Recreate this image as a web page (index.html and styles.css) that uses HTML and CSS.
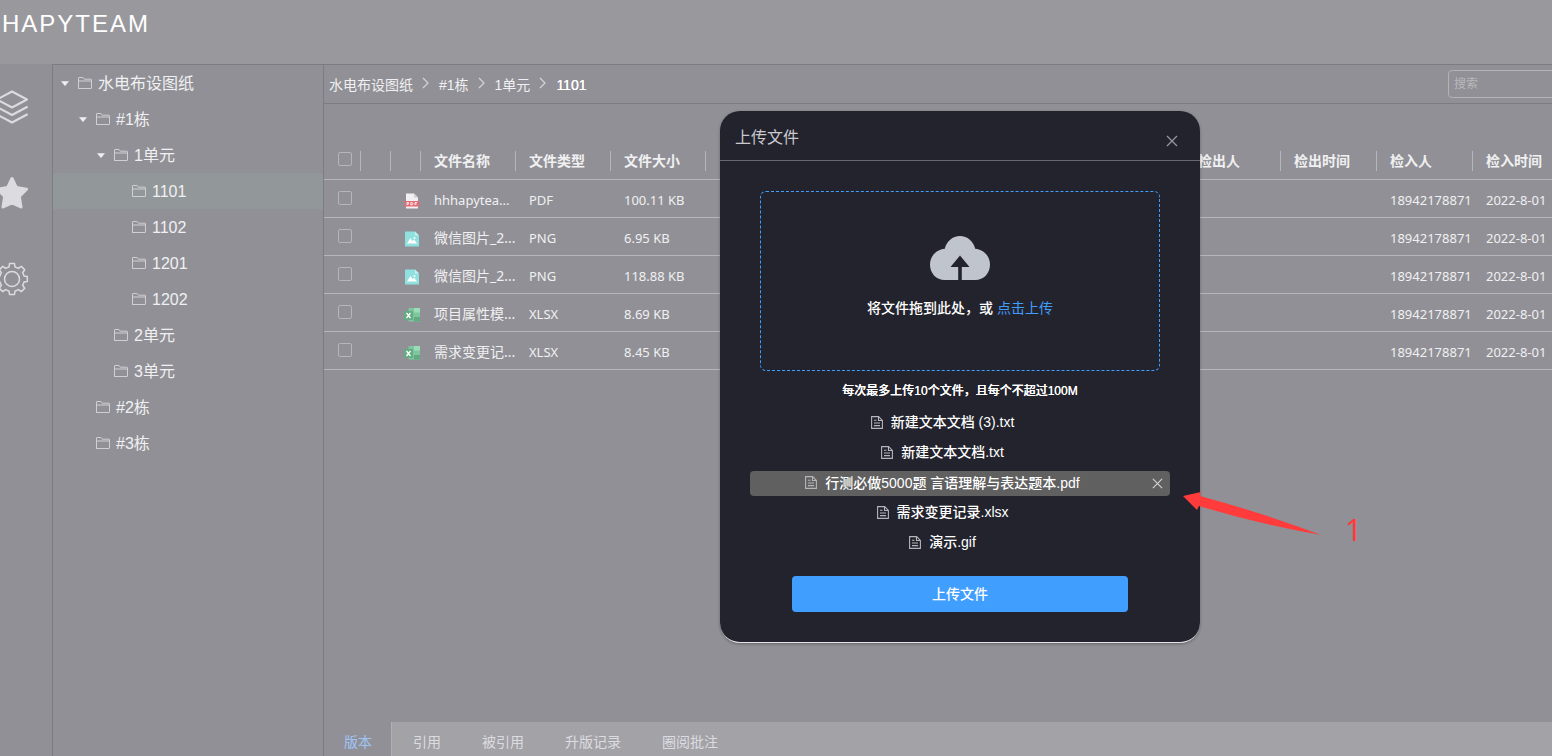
FILE: index.html
```html
<!DOCTYPE html>
<html lang="zh-CN">
<head>
<meta charset="utf-8">
<title>HAPYTEAM</title>
<link rel="stylesheet" href="styles.css">
</head>
<body>
<svg class="sprite" aria-hidden="true">
  <symbol id="folder" viewBox="0 0 14 12"><path d="M.5 11.5V1Q.5.5 1 .5H5L6.3 2.2H13Q13.500 2.200 13.500 2.700V11Q13.500 11.500 13 11.500H1Q.5 11.500.5 11Z M.5 4H13.500" fill="none" stroke="currentColor"/></symbol>
  <symbol id="caret" viewBox="0 0 8 5"><path d="M.5.5H7.500L4 4.800Z" fill="currentColor" stroke="currentColor" stroke-width=".5" stroke-linejoin="round"/></symbol>
  <symbol id="chevron" viewBox="0 0 8 12"><path d="M1 1L6 6L1 11" fill="none" stroke="currentColor" stroke-width="1.200"/></symbol>
  <symbol id="cross" viewBox="0 0 12 12"><path d="M1 1L11 11M11 1L1 11" fill="none" stroke="currentColor" stroke-width="1.300"/></symbol>
  <symbol id="doc" viewBox="0 0 12 13"><path d="M.6.6H7.600L11.400 4.400V12.400H.6ZM7.500.8V4.500H11.200M3 4.300H5.500M3 7H9M3 9.600H9" fill="none" stroke="currentColor" stroke-width="1.100"/></symbol>
  <symbol id="pdf" viewBox="0 0 16 16"><path d="M2 .5H10L14 4.500V15.500H2Z" fill="#f1eff1"/><path d="M10 .5V4.500H14Z" fill="#cfcdd2"/><path d="M.5 8H15.500L15 13.500H1Z" fill="#e56b75"/><path d="M3 12V9.500H4.500V11H3M6.800 12V9.500Q9 9.500 9 10.800T6.800 12M11 12V9.500H13M11 10.900H12.700" fill="none" stroke="#fff" stroke-width=".8"/></symbol>
  <symbol id="img" viewBox="0 0 16 16"><path d="M1 .5H11L15 4.500V15.500H1Z" fill="#8fe0df"/><path d="M11 .5V4.500H15Z" fill="#c4f0ee"/><path d="M3 12.500L6.500 7L8.500 10L10 8.500L13 12.500Z" fill="#fff"/><circle cx="10.500" cy="7" r="1" fill="#fff"/></symbol>
  <symbol id="xls" viewBox="0 0 16 16"><path d="M4.500 1H16V14.500H4.500Z" fill="#7fc59e"/><path d="M10 1H16V5.500H10Z" fill="#9bdcb8"/><path d="M10 10H16V14.500H10Z" fill="#62ab82"/><path d="M0 4H9V13H0Z" fill="#64ac83"/><path d="M2.500 6L6.500 11M6.500 6L2.500 11" stroke="#fff" stroke-width="1.300"/></symbol>
</svg>
<div class="app">
  <header class="topbar"><h1 class="brand">HAPYTEAM</h1></header>
  <div class="workspace">
    <nav class="rail">
      <button class="rail-btn" aria-label="图层"><svg viewBox="0 0 32 34" fill="none" stroke="currentColor" stroke-width="2" stroke-linejoin="round" stroke-linecap="round"><path d="M16 1.500L31 9.500L16 17.500L1 9.500ZM1 17L16 25L31 17M1 24.500L16 32.500L31 24.500"/></svg></button>
      <button class="rail-btn" aria-label="收藏"><svg viewBox="0 0 32 34"><path d="M16 2.500L20.300 11.500L30.500 13.200L23.300 20.500L25 31L16 26.800L7 31L8.700 20.500L1.500 13.200L11.700 11.500Z" fill="currentColor" stroke="currentColor" stroke-width="3" stroke-linejoin="round"/></svg></button>
      <button class="rail-btn" aria-label="设置"><svg viewBox="0 0 32 34" fill="none" stroke="currentColor" stroke-width="1.500" stroke-linejoin="round"><circle cx="16" cy="17" r="7.500"/><path d="M13.500 1.500H18.500L19 5Q21 5.500 22.300 6.400L25.300 4.400L28.700 7.800L26.600 10.700Q27.500 12.300 28 14L31.300 14.500V19.500L28 20Q27.500 21.800 26.600 23.300L28.700 26.200L25.300 29.600L22.300 27.600Q21 28.500 19 29L18.500 32.500H13.500L13 29Q11 28.500 9.700 27.600L6.700 29.600L3.300 26.200L5.400 23.300Q4.500 21.800 4 20L.7 19.500V14.500L4 14Q4.500 12.300 5.400 10.700L3.300 7.800L6.700 4.400L9.700 6.400Q11 5.500 13 5Z"/></svg></button>
    </nav>
    <aside class="tree">
      <div class="node l0"><svg class="caret"><use href="#caret"/></svg><svg class="folder"><use href="#folder"/></svg><span>水电布设图纸</span></div>
      <div class="node l1"><svg class="caret"><use href="#caret"/></svg><svg class="folder"><use href="#folder"/></svg><span>#1栋</span></div>
      <div class="node l2"><svg class="caret"><use href="#caret"/></svg><svg class="folder"><use href="#folder"/></svg><span>1单元</span></div>
      <div class="node l3 current"><i class="caret"></i><svg class="folder"><use href="#folder"/></svg><span>1101</span></div>
      <div class="node l3"><i class="caret"></i><svg class="folder"><use href="#folder"/></svg><span>1102</span></div>
      <div class="node l3"><i class="caret"></i><svg class="folder"><use href="#folder"/></svg><span>1201</span></div>
      <div class="node l3"><i class="caret"></i><svg class="folder"><use href="#folder"/></svg><span>1202</span></div>
      <div class="node l2"><i class="caret"></i><svg class="folder"><use href="#folder"/></svg><span>2单元</span></div>
      <div class="node l2"><i class="caret"></i><svg class="folder"><use href="#folder"/></svg><span>3单元</span></div>
      <div class="node l1"><i class="caret"></i><svg class="folder"><use href="#folder"/></svg><span>#2栋</span></div>
      <div class="node l1"><i class="caret"></i><svg class="folder"><use href="#folder"/></svg><span>#3栋</span></div>
    </aside>
    <main class="content">
      <div class="pathbar">
        <nav class="crumbs">
          <a href="#">水电布设图纸</a><svg class="chevron"><use href="#chevron"/></svg>
          <a href="#">#1栋</a><svg class="chevron"><use href="#chevron"/></svg>
          <a href="#">1单元</a><svg class="chevron"><use href="#chevron"/></svg>
          <a href="#" class="here">1101</a>
        </nav>
        <input class="search" type="text" placeholder="搜索" aria-label="搜索">
      </div>
      <div class="files">
        <table>
          <colgroup><col class="c-check"><col class="c-slim"><col class="c-slim"><col class="c-file"><col class="c-file"><col class="c-file"><col class="c-file"><col class="c-meta"><col class="c-meta"><col class="c-meta"><col class="c-meta"><col class="c-meta"><col class="c-meta"><col class="c-meta"><col class="c-meta"></colgroup>
          <thead>
            <tr><th><input type="checkbox" aria-label="全选"></th><th></th><th></th><th>文件名称</th><th>文件类型</th><th>文件大小</th><th></th><th></th><th></th><th></th><th></th><th>检出人</th><th>检出时间</th><th>检入人</th><th>检入时间</th></tr>
          </thead>
          <tbody>
            <tr><td><input type="checkbox" aria-label="选择文件 1"></td><td></td><td class="kind"><svg><use href="#pdf"/></svg></td><td>hhhapytea...</td><td>PDF</td><td>100.11 KB</td><td></td><td></td><td></td><td></td><td></td><td></td><td></td><td>18942178871</td><td>2022-8-01</td></tr>
            <tr><td><input type="checkbox" aria-label="选择文件 2"></td><td></td><td class="kind"><svg><use href="#img"/></svg></td><td class="name">微信图片_2...</td><td>PNG</td><td>6.95 KB</td><td></td><td></td><td></td><td></td><td></td><td></td><td></td><td>18942178871</td><td>2022-8-01</td></tr>
            <tr><td><input type="checkbox" aria-label="选择文件 3"></td><td></td><td class="kind"><svg><use href="#img"/></svg></td><td class="name">微信图片_2...</td><td>PNG</td><td>118.88 KB</td><td></td><td></td><td></td><td></td><td></td><td></td><td></td><td>18942178871</td><td>2022-8-01</td></tr>
            <tr><td><input type="checkbox" aria-label="选择文件 4"></td><td></td><td class="kind"><svg><use href="#xls"/></svg></td><td class="name">项目属性模...</td><td>XLSX</td><td>8.69 KB</td><td></td><td></td><td></td><td></td><td></td><td></td><td></td><td>18942178871</td><td>2022-8-01</td></tr>
            <tr><td><input type="checkbox" aria-label="选择文件 5"></td><td></td><td class="kind"><svg><use href="#xls"/></svg></td><td class="name">需求变更记...</td><td>XLSX</td><td>8.45 KB</td><td></td><td></td><td></td><td></td><td></td><td></td><td></td><td>18942178871</td><td>2022-8-01</td></tr>
          </tbody>
        </table>
      </div>
      <div class="tabs">
        <button class="tab active">版本</button><button class="tab">引用</button><button class="tab">被引用</button><button class="tab">升版记录</button><button class="tab">圈阅批注</button>
      </div>
    </main>
  </div>
</div>
<div class="overlay">
  <section class="dialog" role="dialog" aria-labelledby="dialog-title">
    <header class="dialog-head">
      <h2 id="dialog-title">上传文件</h2>
      <button class="close" aria-label="关闭"><svg><use href="#cross"/></svg></button>
    </header>
    <div class="dialog-body">
      <div class="drop">
        <svg class="cloud" viewBox="0 0 60 44"><path d="M14.500 44C6.500 44 0 37.500 0 28.500C0 20 6.500 13.500 14.800 12.700C16.500 5.500 22.500 0 30 0S43.500 5.500 45.200 12.700C53.500 13.500 60 20 60 28.500C60 37.500 53.500 44 45.500 44H31.800V31H39.500L30 19.500L20.500 31H28.200V44Z" fill="#c0c4cc"/></svg>
        <p class="drop-text">将文件拖到此处，或 <a href="#">点击上传</a></p>
      </div>
      <p class="tip">每次最多上传10个文件，且每个不超过100M</p>
      <ul class="queue">
        <li><svg class="doc"><use href="#doc"/></svg><span>新建文本文档 (3).txt</span></li>
        <li><svg class="doc"><use href="#doc"/></svg><span>新建文本文档.txt</span></li>
        <li class="hover"><svg class="doc"><use href="#doc"/></svg><span>行测必做5000题 言语理解与表达题本.pdf</span><button class="remove" aria-label="移除"><svg><use href="#cross"/></svg></button></li>
        <li><svg class="doc"><use href="#doc"/></svg><span>需求变更记录.xlsx</span></li>
        <li><svg class="doc"><use href="#doc"/></svg><span>演示.gif</span></li>
      </ul>
      <button class="submit">上传文件</button>
    </div>
    <div class="note">
      <svg class="arrow" viewBox="0 0 138 46"><path d="M0 5L18 1L17 5Q80 22 138 44Q75 33 16 15L14 19Z" fill="#ff3b3b"/></svg>
      <span class="mark">1</span>
    </div>
  </section>
</div>
</body>
</html>
```
FILE: styles.css
```css
* { box-sizing: border-box; }
body {
  margin: 0;
  overflow: hidden;
  background: #919096;
  color: #f0f0f2;
  font: 14px/20px "Liberation Sans", "Noto Sans CJK SC", sans-serif;
}
button { padding: 0; border: 0; background: none; color: inherit; font: inherit; }
a { color: inherit; text-decoration: none; }
svg { display: block; }
h1, h2, p, ul { margin: 0; padding: 0; }
.sprite { position: absolute; width: 0; height: 0; }

.app { display: flex; flex-direction: column; height: 100vh; }
.topbar { height: 64px; padding: 8px 2px; background: #99989d; }
.brand { color: #fff; font-size: 24px; font-weight: 400; line-height: 32px; letter-spacing: 2px; }
.workspace { flex: 1; display: flex; min-height: 0; }

.rail { flex: none; width: 52px; padding-top: 26px; display: flex; flex-direction: column; gap: 52px; }
.rail-btn { width: 32px; height: 34px; margin-left: -4px; color: #dcdce0; }
.rail-btn svg { width: 32px; height: 34px; }

.tree { flex: none; width: 272px; border: 1px solid #7d7c82; border-bottom: 0; }
.node { display: flex; align-items: center; height: 36px; font-size: 16px; }
.node span { padding-top: 1px; }
.node .caret { width: 8px; height: 5px; margin-right: 9px; }
.node .folder { width: 14px; height: 12px; margin-right: 6px; color: #d0d0d4; }
.l0 { padding-left: 8px; }
.l1 { padding-left: 26px; }
.l2 { padding-left: 44px; }
.l3 { padding-left: 62px; }
.current { background: #929799; }

.content { flex: 1; min-width: 0; display: flex; flex-direction: column; border-top: 1px solid #7d7c82; }
.pathbar { display: flex; justify-content: space-between; height: 39px; padding-left: 5px; border-bottom: 1px solid #7d7c82; }
.crumbs { display: flex; align-items: center; padding-top: 2px; }
.crumbs .chevron { width: 8px; height: 12px; margin: 0 9px 4px 9px; color: #d5d5d9; }
.here { color: #fff; text-shadow: 0 0 0 #fff; }
.search {
  width: 112px; height: 28px; margin: 5px -8px 0 0; padding: 0 5px;
  border: 1px solid #b4b3b8; border-radius: 4px; background: none; color: #fff;
  font: 12px "Liberation Sans", "Noto Sans CJK SC", sans-serif;
}
.search::placeholder { color: #b9b8bd; }

.files { flex: 1; min-height: 0; overflow: hidden; padding-top: 38px; }
table { table-layout: fixed; width: 1245px; min-width: 100%; border-collapse: separate; border-spacing: 0; }
.c-check { width: 37px; }
.c-slim { width: 30px; }
.c-file { width: 95px; }
.c-meta { width: 96px; }
th, td { height: 38px; padding: 0 0 0 13px; border-bottom: 1px solid #b6b5ba; text-align: left; white-space: nowrap; }
th {
  font-weight: 700;
  background: linear-gradient(#b6b5ba, #b6b5ba) right center / 1px 20px no-repeat;
}
td { padding-top: 2px; font-family: "Noto Sans", "Noto Sans CJK SC", sans-serif; font-size: 13px; }
td.name { font-size: 14px; }
.kind svg { width: 16px; height: 16px; margin-top: 2px; }
input[type="checkbox"] { display: block; appearance: none; width: 14px; height: 14px; margin: 0 0 3px 1px; border: 1px solid #b6b5ba; border-radius: 2px; }

.tabs { display: flex; gap: 1px; height: 34px; background: #a3a2a7; }
.tab { padding: 6px 20px 0; color: #dcdce0; }
.tab.active { padding-right: 19px; background: #919096; color: #9fc5f8; border-right: 1px solid #b0afb4; }

.overlay { position: absolute; inset: 0; display: flex; align-items: center; justify-content: center; padding: 0 0 2px 368px; }
.dialog { position: relative; width: 480px; border-bottom: 1px solid #e4e4e8; border-radius: 20px; background: #23232d; box-shadow: 0 1px 3px rgba(0, 0, 0, .3); color: #fff; }
.dialog-head { display: flex; align-items: center; justify-content: space-between; height: 50px; padding: 4px 22px 0 15px; border-bottom: 1px solid #66666f; }
.dialog-head h2 { color: #c9c9ce; font-size: 16px; font-weight: 400; line-height: 24px; }
.close { padding-top: 7px; color: #96969e; }
.close svg { width: 12px; height: 12px; }
.dialog-body { padding: 30px; text-align: center; font-weight: 500; }
.drop { display: flex; flex-direction: column; align-items: center; height: 180px; margin: 0 10px; padding-top: 44px; border: 1px dashed #409eff; border-radius: 6px; }
.cloud { width: 60px; height: 44px; }
.drop-text { margin-top: 18px; }
.drop-text a { color: #409eff; font-weight: 400; }
.tip { margin-top: 10px; font-size: 12px; text-shadow: 0 0 0 #fff; }
.queue { display: flex; flex-direction: column; gap: 5px; margin-top: 10px; list-style: none; }
.queue li { position: relative; display: flex; align-items: center; justify-content: center; height: 25px; padding: 0 35px 3px 0; border-radius: 4px; }
.queue .doc { width: 12px; height: 13px; margin-right: 8px; color: #b5b5bb; }
.queue .hover { padding-bottom: 2px; background: #606060; }
.remove { position: absolute; right: 7px; top: 7px; color: #d0d0d0; }
.remove svg { width: 11px; height: 11px; }
.submit { width: 336px; height: 36px; margin-top: 20px; border-radius: 4px; background: #409eff; }

.note { position: absolute; left: 463px; top: 380px; display: flex; gap: 24px; }
.arrow { width: 138px; height: 46px; }
.mark { padding-top: 23px; color: #ff3b3b; font: 30px/32px "Noto Sans", sans-serif; }
```
